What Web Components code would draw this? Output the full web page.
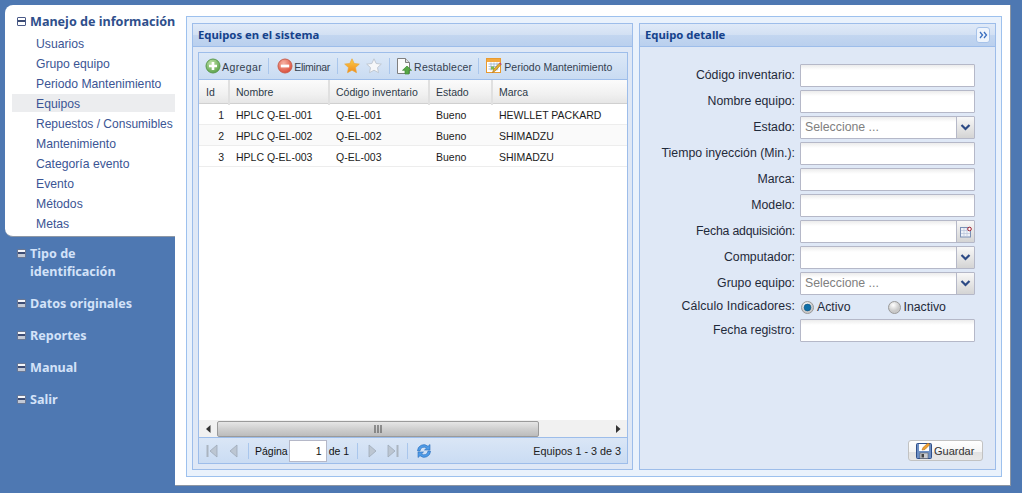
<!doctype html>
<html lang="es"><head><meta charset="utf-8"><title>Equipos</title>
<style>
html,body{margin:0;height:100%;overflow:hidden}
body{background:#4e78b2;font-family:"Liberation Sans",Arial,sans-serif}
</style></head>
<body>
<app-shell>
  <side-nav slot="nav">
    <nav-group open label="Manejo de información">
      <nav-link>Usuarios</nav-link><nav-link>Grupo equipo</nav-link><nav-link>Periodo Mantenimiento</nav-link>
      <nav-link selected>Equipos</nav-link><nav-link style="font-size:12px">Repuestos / Consumibles</nav-link><nav-link>Mantenimiento</nav-link>
      <nav-link>Categoría evento</nav-link><nav-link>Evento</nav-link><nav-link>Métodos</nav-link><nav-link>Metas</nav-link>
    </nav-group>
    <nav-group label="Tipo de identificación"></nav-group>
    <nav-group label="Datos originales"></nav-group>
    <nav-group label="Reportes"></nav-group>
    <nav-group label="Manual"></nav-group>
    <nav-group label="Salir"></nav-group>
  </side-nav>
  <work-frame slot="main">
    <ui-panel style="width:441px" title="Equipos en el sistema"><equipos-grid></equipos-grid></ui-panel>
    <ui-panel style="flex:1" title="Equipo detalle" tool><equipo-form></equipo-form></ui-panel>
  </work-frame>
</app-shell>

<script>
const ICONS={
 add:`<svg width="16" height="16" viewBox="0 0 16 16"><defs><radialGradient id="a" cx=".4" cy=".3" r=".8"><stop offset="0" stop-color="#bfe3a8"/><stop offset="1" stop-color="#4f9a3e"/></radialGradient></defs><circle cx="8" cy="8" r="7" fill="url(#a)" stroke="#5c9a50"/><path d="M8 4v8M4 8h8" stroke="#fff" stroke-width="2.6"/></svg>`,
 del:`<svg width="16" height="16" viewBox="0 0 16 16"><defs><radialGradient id="b" cx=".4" cy=".3" r=".8"><stop offset="0" stop-color="#f7b3a3"/><stop offset="1" stop-color="#d8402c"/></radialGradient></defs><circle cx="8" cy="8" r="7" fill="url(#b)" stroke="#c9604f"/><path d="M3.8 8h8.4" stroke="#fff" stroke-width="2.8"/></svg>`,
 star:`<svg width="16" height="16" viewBox="0 0 16 16"><defs><linearGradient id="c" x1="0" y1="0" x2="0" y2="1"><stop offset="0" stop-color="#fbd04a"/><stop offset="1" stop-color="#f08a1d"/></linearGradient></defs><path d="M8 .8l2.2 4.7 5.1.6-3.8 3.5 1 5.1L8 12.2l-4.5 2.5 1-5.1L.7 6.1l5.1-.6z" fill="url(#c)" stroke="#eaa63a" stroke-width=".7"/></svg>`,
 star0:`<svg width="16" height="16" viewBox="0 0 16 16"><path d="M8 .8l2.2 4.7 5.1.6-3.8 3.5 1 5.1L8 12.2l-4.5 2.5 1-5.1L.7 6.1l5.1-.6z" fill="#f6f7f9" stroke="#bcc4ce" stroke-width=".9"/></svg>`,
 reset:`<svg width="16" height="17" viewBox="0 0 16 17"><path d="M1.500.5h8l4 4v11h-12z" fill="#fbfbfb" stroke="#7f7f7f"/><path d="M9.500.5v4h4" fill="#ddd" stroke="#7f7f7f"/><path d="M11 8l4.500 4.300H13V16H9v-3.700H6.500z" fill="#58a846" stroke="#3e8a34" stroke-width=".7"/></svg>`,
 cal:`<svg width="16" height="16" viewBox="0 0 16 16"><rect x=".5" y=".5" width="14" height="14" fill="#fff" stroke="#e99a2f"/><rect x="1" y="1" width="13" height="3" fill="#f3a83f"/><path d="M2.500 6h10M2.500 8.500h10M2.500 11h10M5 4.500v8M8 4.500v8M11 4.500v8" stroke="#9fb4d0" stroke-width=".8"/><rect x="5" y="8.500" width="3" height="3" fill="#7db84e"/><path d="M6.500 14.500l1-3 6-6.500 1.700 1.500-6 6.500z" fill="#e6b02e" stroke="#a86f1d" stroke-width=".6"/><path d="M13.500 5l1.700 1.500" stroke="#c0487a" stroke-width="1.500"/></svg>`,
 first:`<svg width="12" height="14" viewBox="0 0 12 14"><path d="M1.500 1v12" stroke="#aab4c0" stroke-width="2"/><path d="M11 1v12L4 7z" fill="#bcc6d2" stroke="#9eaab8" stroke-width=".8"/></svg>`,
 prev:`<svg width="9" height="14" viewBox="0 0 9 14"><path d="M8 1v12L1 7z" fill="#bcc6d2" stroke="#9eaab8" stroke-width=".8"/></svg>`,
 next:`<svg width="9" height="14" viewBox="0 0 9 14"><path d="M1 1v12l7-6z" fill="#bcc6d2" stroke="#9eaab8" stroke-width=".8"/></svg>`,
 last:`<svg width="12" height="14" viewBox="0 0 12 14"><path d="M10.500 1v12" stroke="#aab4c0" stroke-width="2"/><path d="M1 1v12l7-6z" fill="#bcc6d2" stroke="#9eaab8" stroke-width=".8"/></svg>`,
 refresh:`<svg width="16" height="16" viewBox="0 0 16 16"><path d="M1.500 8A6.300 6.300 0 0 1 12 3.300L14 1.500V7H8.500l2-1.800A3.900 3.900 0 0 0 4 8z" fill="#4f9ce8" stroke="#2a6cb8" stroke-width=".6"/><path d="M14.500 8A6.300 6.300 0 0 1 4 12.700L2 14.500V9h5.500l-2 1.800A3.900 3.900 0 0 0 12 8z" fill="#4f9ce8" stroke="#2a6cb8" stroke-width=".6"/></svg>`,
 save:`<svg width="16" height="16" viewBox="0 0 16 16"><rect x=".5" y=".5" width="15" height="15" rx="1" fill="#6d8fc4" stroke="#2f4f8a"/><rect x="3" y="1" width="10" height="7" fill="#fff"/><rect x="4" y="10" width="8" height="5.500" fill="#c9ccd2" stroke="#555" stroke-width=".5"/><rect x="5.500" y="11" width="2.500" height="3.500" fill="#444"/><path d="M6 7l1-2.500L12 0l2 1.500-5 5z" fill="#f0a030" stroke="#a86414" stroke-width=".5"/></svg>`
};
function def(name,html){customElements.define(name,class extends HTMLElement{
  constructor(){super();this.attachShadow({mode:'open'}).innerHTML=typeof html==='function'?html(this):html}
})}

def('app-shell',`<style>
:host{display:flex;box-sizing:border-box;width:1006px;height:481px;margin:5px 0 0 5px}
.nav{width:170px;flex:none}.main{flex:1;min-width:0;display:flex}
</style><div class="nav"><slot name="nav"></slot></div><div class="main"><slot name="main"></slot></div>`);

def('side-nav',`<style>:host{display:block}</style><slot></slot>`);

def('nav-group',h=>`<style>
:host{display:block;font:bold 12.6px/18px "Noto Sans",sans-serif;color:#d3e2f8}
.head{display:flex;padding:0 0 14px 12px;gap:4px}
.box{flex:none;width:9px;height:9px;margin-top:4px;box-sizing:border-box;border:1px solid #6a7894;border-radius:1px;
 background:linear-gradient(#f4f6fa 0 2px,#3c4c74 2px 4px,#c2c9d6 4px)}
:host([open]){color:#2f4f8c;background:#fff;border-radius:8px 0 0 8px;border-bottom:1px solid #8e98a6;margin-bottom:8px;padding:8px 0 2px}
:host([open]) .head{padding-bottom:3px;white-space:nowrap}
:host([open]) .box{border-color:#4a5a88;background:linear-gradient(#fff 0 2px,#3c4c74 2px 4px,#fff 4px)}
.t{width:120px}:host([open]) .t{width:auto}
:host(:not([open])) .list{display:none}
</style><div class="head"><span class="box"></span><span class="t">${h.getAttribute('label')}</span></div><div class="list"><slot></slot></div>`);

def('nav-link',`<style>
:host{display:block;height:20px;padding-top:1px;box-sizing:border-box;margin-left:7px;padding-left:24px;font:12.2px/18px "Liberation Sans",sans-serif;color:#3b5594;white-space:nowrap}
:host([selected]){background:linear-gradient(#ecedef 0 18px,transparent 18px)}
</style><slot></slot>`);

def('work-frame',`<style>
:host{display:flex;flex:1;background:#fff;padding:11px 8px 8px 11px;border-right:1px solid #8d96a3;border-bottom:1px solid #8d96a3;box-sizing:border-box}
.in{flex:1;display:flex;gap:6px;border:1px solid #9dc1ee;background:#eaf2fc;padding:6px 5px 6px 5px;min-width:0}
</style><div class="in"><slot></slot></div>`);

def('ui-panel',h=>`<style>
:host{display:flex;flex-direction:column;box-sizing:border-box;border:1px solid #9dbdea;background:#dfe8f6;min-width:0}
.hd{height:23px;flex:none;box-sizing:border-box;border-bottom:1px solid #9dbdea;padding:0 5px;display:flex;align-items:center;justify-content:space-between;
 font:bold 11.3px/21px "Noto Sans",sans-serif;color:#15428b;background:linear-gradient(#e0eaf8,#d2e0f3 50%,#c3d6f0 50%,#bad0ee)}
.hd>span:first-child{padding-bottom:2px}
.tool{width:14px;height:16px;box-sizing:border-box;border:1px solid #a7c3ea;border-radius:3px;background:#eef4fc;display:flex;align-items:center;justify-content:center}
.bd{flex:1;display:flex;min-height:0}
</style><div class="hd"><span>${h.getAttribute('title')}</span>${h.hasAttribute('tool')?`<span class="tool"><svg width="9" height="8" viewBox="0 0 9 8"><path d="M1 1l2.500 3L1 7M5 1l2.500 3L5 7" fill="none" stroke="#3a6fc0" stroke-width="1.300"/></svg></span>`:''}</div><div class="bd"><slot></slot></div>`);

def('equipos-grid',`<style>
:host{flex:1;display:flex;flex-direction:column;margin:5px 4px 5px 5px;border:1px solid #9dbdea;background:#fff;font:10.5px "Liberation Sans",sans-serif;color:#1c1c1c;min-width:0}
.bar{display:flex;align-items:center;background:linear-gradient(#dce8f7,#c9dbf2);flex:none}
.tb{height:27px;padding-left:6px;border-bottom:1px solid #9dbdea;box-sizing:border-box;color:#33404f}
.tb .lb{padding-top:2px}
.i{display:inline-flex;align-items:center;gap:1px}
.sep{width:1px;height:16px;background:#a9c6ec;flex:none}
.row,.th{display:grid;grid-template-columns:31px 100px 100px 63px 1fr}
.th{height:24px;box-sizing:border-box;background:linear-gradient(#fbfbfb,#f1f1f1 60%,#e6e6e6);border-bottom:1px solid #d0d0d0;color:#2c3a48}
.th span{padding:0 6px;line-height:25px;border-right:2px solid #e0e0e0}
.th span:first-child{padding-left:7px}
.th span:last-child{border-right:0}
.row{height:21px;box-sizing:border-box;border-bottom:1px solid #ededed;line-height:23px}
.row:nth-child(even){background:#fafafa}
.row span{padding:0 6px;white-space:nowrap}
.row span:first-child{text-align:right;padding-right:6px}
.body{flex:1}
.sb{height:17px;flex:none;background:#f1f1f1;display:grid;grid-template-columns:18px 322px 1fr 18px;align-items:center;justify-items:center}
.thumb{width:100%;height:16px;box-sizing:border-box;border:1px solid #9a9a9a;border-radius:2px;background:linear-gradient(#e6e6e6,#cfcfcf 50%,#bcbcbc);display:flex;align-items:center;justify-content:center}
.pg{height:26px;border-top:1px solid #9dbdea;box-sizing:border-box;padding-left:7px;color:#111;background:linear-gradient(#dae6f6,#cadcf3);justify-content:flex-start}
.pg .t{padding-top:1px}
input{width:38px;height:22px;box-sizing:border-box;border:1px solid #b5b8c8;text-align:right;padding:0 4px;margin:0 2px 0 1px;font:inherit;background:#fff;color:#111}
.end{margin-left:auto;padding-right:6px;color:#222;font-size:10.8px}
</style>
<div class="bar tb">
 <span class="i">${ICONS.add}<span class="lb" style="letter-spacing:.4px">Agregar</span></span><span class="sep" style="margin:0 8px 0 6px"></span>
 <span class="i">${ICONS.del}<span class="lb" style="letter-spacing:-.25px">Eliminar</span></span><span class="sep" style="margin:0 6px 0 7px"></span>
 <span class="i" style="gap:6px">${ICONS.star}${ICONS.star0}</span><span class="sep" style="margin:0 6px 0 7px"></span>
 <span class="i" style="gap:2px">${ICONS.reset}<span class="lb" style="letter-spacing:.2px">Restablecer</span></span><span class="sep" style="margin:0 7px 0 6px"></span>
 <span class="i" style="gap:2px">${ICONS.cal}<span class="lb">Periodo Mantenimiento</span></span>
</div>
<div class="th"><span>Id</span><span>Nombre</span><span>Código inventario</span><span>Estado</span><span>Marca</span></div>
<div>
<div class="row"><span>1</span><span>HPLC Q-EL-001</span><span>Q-EL-001</span><span>Bueno</span><span>HEWLLET PACKARD</span></div>
<div class="row"><span>2</span><span>HPLC Q-EL-002</span><span>Q-EL-002</span><span>Bueno</span><span>SHIMADZU</span></div>
<div class="row"><span>3</span><span>HPLC Q-EL-003</span><span>Q-EL-003</span><span>Bueno</span><span>SHIMADZU</span></div>
</div>
<div class="body"></div>
<div class="sb"><svg width="5" height="8" viewBox="0 0 5 8"><path d="M4.500 0v8L0 4z" fill="#333"/></svg>
 <div class="thumb"><svg width="9" height="8" viewBox="0 0 9 8"><path d="M1 0v8M4 0v8M7 0v8" stroke="#666" stroke-width="1.300"/></svg></div><span></span>
 <svg width="5" height="8" viewBox="0 0 5 8"><path d="M0 0v8l4.500-4z" fill="#333"/></svg></div>
<div class="bar pg">
 ${ICONS.first}<span style="width:11px"></span>${ICONS.prev}<span class="sep" style="margin:0 6px 0 10px"></span>
 <span class="t">Página</span><input value="1" aria-label="Página"><span class="t">de 1</span>
 <span class="sep" style="margin:0 10px 0 8px"></span>${ICONS.next}<span style="width:10px"></span>${ICONS.last}
 <span class="sep" style="margin:0 8px 0 8px"></span>${ICONS.refresh}
 <span class="end t">Equipos 1 - 3 de 3</span>
</div>`);

def('form-row',h=>`<style>
:host{display:grid;grid-template-columns:155px 175px;column-gap:5px;align-items:center;height:23px;margin-bottom:3px;font:12.3px "Liberation Sans",sans-serif;color:#1f2a3a}
:host([short]){height:18px}
label{text-align:right;white-space:nowrap;padding-bottom:2px}
</style><label style="${h.getAttribute('sp')?'letter-spacing:'+h.getAttribute('sp'):''}">${h.getAttribute('label')}:</label><div><slot></slot></div>`);

def('text-field',h=>{const k=h.getAttribute('kind');const tr=k==='select'?`<svg width="11" height="7" viewBox="0 0 11 7"><path d="M1.500 1l4 4 4-4" fill="none" stroke="#2d4a85" stroke-width="2.200"/></svg>`:k==='date'?`<svg width="12" height="12" viewBox="0 0 12 12"><rect x=".5" y="1.500" width="10" height="9.500" fill="#eef2f8" stroke="#7a8fb5"/><path d="M1 4.500h9M1 7.500h9M4 2v9M7 2v9" stroke="#b8c4da" stroke-width=".7"/><circle cx="9.500" cy="3" r="1.800" fill="#fff" stroke="#a01c2c"/></svg>`:'';
return `<style>
:host{display:flex;height:23px;box-sizing:border-box;border:1px solid #b5b8c8;background:linear-gradient(#ececec,#fff 5px);border-radius:1px;font:12.3px "Liberation Sans",sans-serif;color:#808080}
.v{flex:1;padding-left:4px;line-height:21px}
.t{width:17px;flex:none;border-left:1px solid #b5b8c8;background:linear-gradient(#f8f8f8,#d4d4d4);display:flex;align-items:center;justify-content:center}
</style><span class="v">${h.getAttribute('placeholder')||''}</span>${tr?`<span class="t">${tr}</span>`:''}`});

def('radio-opt',h=>`<style>
:host{display:inline-flex;align-items:center;gap:3px;font:12.3px "Liberation Sans",sans-serif;color:#1f2a3a}
</style><svg width="13" height="13" viewBox="0 0 13 13"><defs><radialGradient id="r" cx=".4" cy=".3"><stop offset="0" stop-color="#fff"/><stop offset="1" stop-color="#c9c9c9"/></radialGradient></defs><circle cx="6.500" cy="6.500" r="6" fill="url(#r)" stroke="#9a9a9a"/>${h.hasAttribute('checked')?'<circle cx="6.500" cy="6.500" r="3.400" fill="#0f6fa8" stroke="#0a4f7c" stroke-width=".6"/>':''}</svg><slot></slot>`);

def('equipo-form',`<style>
:host{flex:1;display:flex;flex-direction:column;padding:17px 0 8px 0;box-sizing:border-box}
.sp{flex:1}
.ft{display:flex;justify-content:flex-end;padding-right:12px}
.rad{display:flex;gap:37px;padding-left:1px}
button{width:75px;height:21px;box-sizing:border-box;border:1px solid #c2c2c2;border-radius:3px;display:flex;align-items:center;gap:2px;padding:0 0 0 7px;
 background:linear-gradient(#fff,#f4f4f4 60%,#e2e2e2 60%,#e8e8e8);font:11px "Liberation Sans",sans-serif;color:#333}
</style>
<form-row label="Código inventario"><text-field></text-field></form-row>
<form-row label="Nombre equipo"><text-field></text-field></form-row>
<form-row label="Estado"><text-field kind="select" placeholder="Seleccione ..."></text-field></form-row>
<form-row label="Tiempo inyección (Min.)"><text-field></text-field></form-row>
<form-row label="Marca"><text-field></text-field></form-row>
<form-row label="Modelo"><text-field></text-field></form-row>
<form-row sp="-.2px" label="Fecha adquisición"><text-field kind="date"></text-field></form-row>
<form-row label="Computador"><text-field kind="select"></text-field></form-row>
<form-row label="Grupo equipo"><text-field kind="select" placeholder="Seleccione ..."></text-field></form-row>
<form-row short sp=".1px" label="Cálculo Indicadores"><div class="rad"><radio-opt checked>Activo</radio-opt><radio-opt>Inactivo</radio-opt></div></form-row>
<form-row label="Fecha registro"><text-field></text-field></form-row>
<div class="sp"></div>
<div class="ft"><button type="button">${ICONS.save}<span>Guardar</span></button></div>`);
</script>
</body></html>
